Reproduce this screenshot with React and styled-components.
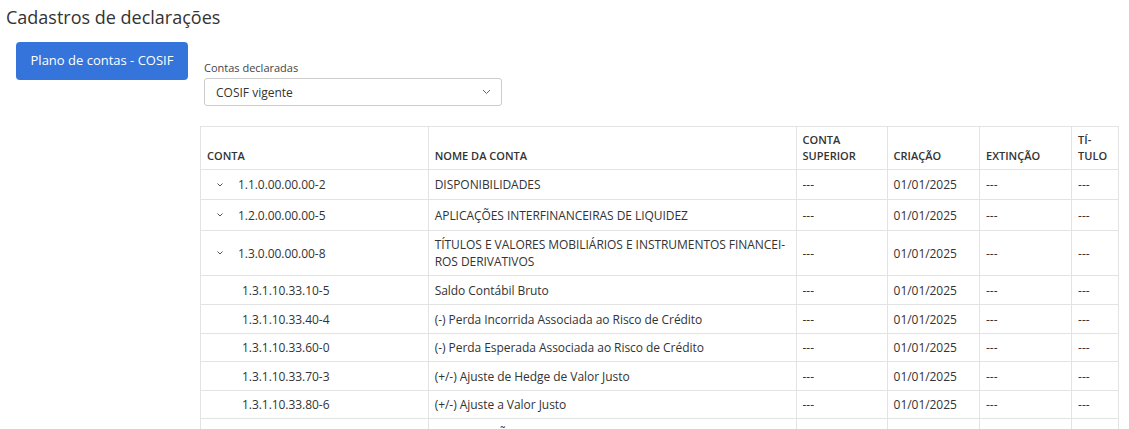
import React from "react";
import styled, { createGlobalStyle } from "styled-components";

const Global = createGlobalStyle`
  body { margin: 0; font-family: "Open Sans", sans-serif; color: #333; background: #fff; overflow: hidden; }
`;
const Page = styled.div`padding: 4px 6px;`;
const Title = styled.h1`font-size: 18px; font-weight: 400; margin: 0 0 12px; color: #333; line-height: 26px;`;
const Layout = styled.div`display: flex; gap: 11px; padding-left: 10px;`;
const SideBtn = styled.button`
  width: 174px; height: 38px; background: #3575db; color: #fff; border: none; border-radius: 4px;
  font: 13px "Open Sans", sans-serif; align-self: flex-start; padding-bottom: 4px;
`;
const Main = styled.div`flex: 1; padding-top: 18px; margin-left: 1px; margin-right: 4px;`;
const Field = styled.div`padding-left: 4px;`;
const Label = styled.div`font-size: 11px; color: #444; margin-bottom: 3px;`;
const Select = styled.div`
  width: 298px; height: 28px; box-sizing: border-box; border: 1px solid #ccc; border-radius: 3px;
  display: flex; align-items: center; justify-content: space-between; padding: 0 10px 0 11px; font-size: 12px; color: #333;
`;
const Table = styled.table`
  margin-top: 20px; width: 919px; border-collapse: collapse; font-size: 12px;
  td, th { border: 1px solid #e3e3e3; padding: 0 6px; text-align: left; }
`;
const Th = styled.th`font-size: 11px; font-weight: 600; vertical-align: bottom; padding-bottom: 5px !important; line-height: 16px; height: 37px; width: ${p => p.w}px;`;
const Tr = styled.tr`height: ${p => p.h || 29}px;`;
const Td = styled.td`line-height: 17px; white-space: nowrap; letter-spacing: -0.05px;`;
const Code = styled.span`display: inline-flex; align-items: center; padding-left: ${p => (p.child ? 35 : 9)}px;`;
const Chev = styled.svg`width: 8px; height: 8px; margin-right: 14px;`;

const rows = [
  ["1.1.0.00.00.00-2", "DISPONIBILIDADES", 0, 30],
  ["1.2.0.00.00.00-5", "APLICAÇÕES INTERFINANCEIRAS DE LIQUIDEZ", 0, 31],
  ["1.3.0.00.00.00-8", <>TÍTULOS E VALORES MOBILIÁRIOS E INSTRUMENTOS FINANCEI-<br />ROS DERIVATIVOS</>, 0, 45],
  ["1.3.1.10.33.10-5", "Saldo Contábil Bruto", 1, 29],
  ["1.3.1.10.33.40-4", "(-) Perda Incorrida Associada ao Risco de Crédito", 1, 29],
  ["1.3.1.10.33.60-0", "(-) Perda Esperada Associada ao Risco de Crédito", 1, 28],
  ["1.3.1.10.33.70-3", "(+/-) Ajuste de Hedge de Valor Justo", 1, 29],
  ["1.3.1.10.33.80-6", "(+/-) Ajuste a Valor Justo", 1, 28],
  ["1.3.1.10.33.90-9", "APROPRIAÇÃO DE RESULTADO", 1, 29],
];

export default function App() {
  return (
    <Page>
      <Global />
      <Title>Cadastros de declarações</Title>
      <Layout>
        <SideBtn>Plano de contas - COSIF</SideBtn>
        <Main>
          <Field>
            <Label>Contas declaradas</Label>
            <Select>
              COSIF vigente
              <svg width="9" height="6" viewBox="0 0 9 6"><path d="M1 1l3.5 3.5L8 1" stroke="#666" fill="none" strokeWidth="1" /></svg>
            </Select>
          </Field>
          <Table>
            <thead>
              <tr>
                <Th w={218}>CONTA</Th>
                <Th w={355}>NOME DA CONTA</Th>
                <Th w={79}>CONTA<br />SUPERIOR</Th>
                <Th w={80}>CRIAÇÃO</Th>
                <Th w={80}>EXTINÇÃO</Th>
                <Th w={34}>TÍ-<br />TULO</Th>
              </tr>
            </thead>
            <tbody>
              {rows.map(([c, n, child, h]) => (
                <Tr key={c} h={h}>
                  <Td>
                    <Code child={child}>
                      {!child && <Chev viewBox="0 0 8 8"><path d="M1.5 2.5L4 5l2.5-2.5" stroke="#555" fill="none" /></Chev>}
                      {c}
                    </Code>
                  </Td>
                  <Td>{n}</Td>
                  <Td>---</Td>
                  <Td>01/01/2025</Td>
                  <Td>---</Td>
                  <Td>---</Td>
                </Tr>
              ))}
            </tbody>
          </Table>
        </Main>
      </Layout>
    </Page>
  );
}
